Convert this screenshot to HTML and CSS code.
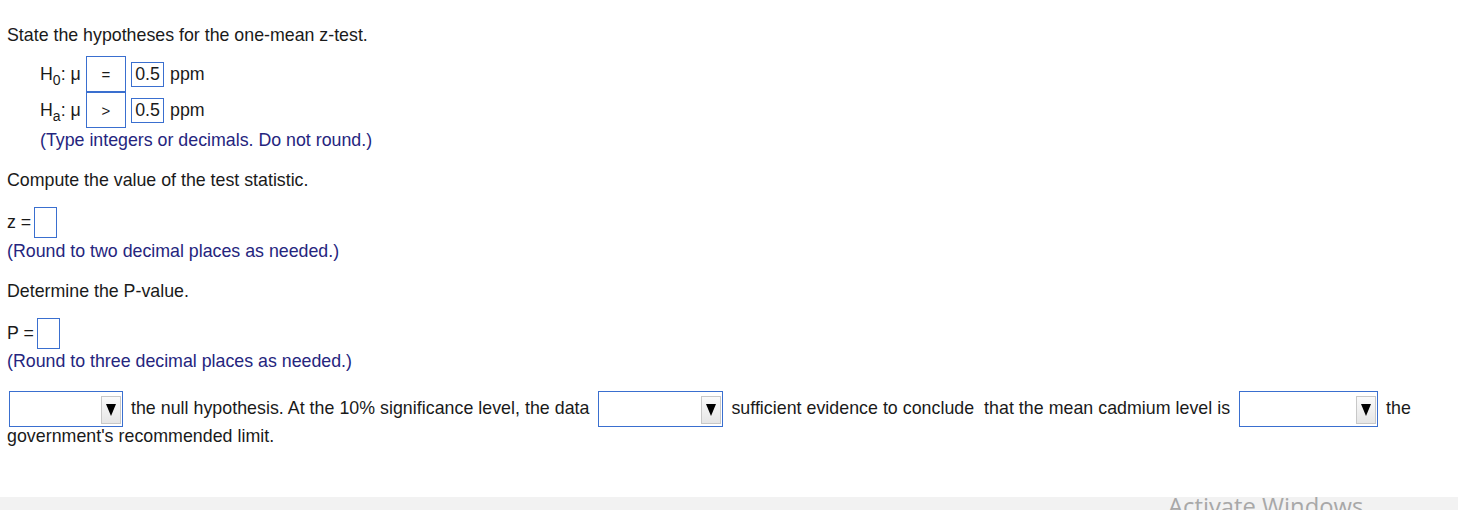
FILE: index.html
```html
<!DOCTYPE html>
<html>
<head>
<meta charset="utf-8">
<link rel="stylesheet" href="styles.css">
</head>
<body>
<div class="page">
  <div class="content">
    <p class="line title">State the hypotheses for the one-mean z-test.</p>
    <div class="hyp">
      <div class="hrow">
        <span class="hlabel">H<sub>0</sub>: μ</span>
        <span class="opbox">=</span>
        <span class="valbox">0.5</span>
        <span class="unit">ppm</span>
      </div>
      <div class="hrow">
        <span class="hlabel">H<sub>a</sub>: μ</span>
        <span class="opbox">&gt;</span>
        <span class="valbox">0.5</span>
        <span class="unit">ppm</span>
      </div>
      <p class="line note">(Type integers or decimals. Do not round.)</p>
    </div>
    <p class="line section">Compute the value of the test statistic.</p>
    <div class="ansrow">
      <span class="anslabel">z =</span>
      <span class="ansbox"></span>
    </div>
    <p class="line note note-z">(Round to two decimal places as needed.)</p>
    <p class="line section">Determine the P-value.</p>
    <div class="ansrow">
      <span class="anslabel">P =</span>
      <span class="ansbox"></span>
    </div>
    <p class="line note note-p">(Round to three decimal places as needed.)</p>
    <p class="conclusion"><span class="dd dd1"><span class="dd-arrow"></span></span> the null hypothesis. At the 10% significance level, the data <span class="dd dd2"><span class="dd-arrow"></span></span> sufficient evidence to conclude&nbsp; that the mean cadmium level is <span class="dd dd3"><span class="dd-arrow"></span></span> the government's recommended limit.</p>
  </div>
  <div class="footer"></div>
  <div class="watermark">Activate Windows</div>
</div>
</body>
</html>
```

FILE: styles.css
```css
html, body {
  margin: 0;
  padding: 0;
  background: #ffffff;
}

body {
  font-family: "Liberation Sans", Arial, sans-serif;
  font-size: 17.8px;
  color: #1a1a1a;
}

.page {
  position: relative;
  height: 510px;
  overflow: hidden;
  display: flex;
  flex-direction: column;
}

.content {
  flex: 1;
  padding: 25px 0 0 7px;
}

.line {
  margin: 0;
  line-height: 20px;
}

.hyp {
  margin-top: 11px;
  padding-left: 33px;
}

.hrow {
  display: flex;
  align-items: center;
  height: 36px;
}

.hlabel {
  width: 46px;
  line-height: 20px;
  white-space: nowrap;
}

.hlabel sub {
  font-size: 14px;
  vertical-align: -5px;
  line-height: 0;
}

.opbox {
  width: 38px;
  height: 34px;
  border: 1px solid #3a6fcf;
  display: flex;
  align-items: center;
  justify-content: center;
  font-size: 15px;
}

.valbox {
  margin-left: 5px;
  width: 31px;
  height: 23px;
  border: 1px solid #3a6fcf;
  display: flex;
  align-items: center;
  justify-content: center;
}

.unit {
  margin-left: 6px;
}

.note {
  color: #25257e;
  margin-top: 2px;
}

.section {
  margin-top: 20px;
}

.section + .ansrow {
  margin-top: 17px;
}

.ansrow {
  display: flex;
  align-items: center;
  height: 31px;
}

.anslabel {
  margin-right: 3px;
}

.ansbox {
  width: 21px;
  height: 29px;
  border: 1px solid #3a6fcf;
}

.note-z {
  margin-top: 3px;
}

.note-p {
  margin-top: 2px;
}

.conclusion {
  margin: 20px 0 0 0;
  line-height: 19px;
  letter-spacing: 0.03px;
}

.dd {
  display: inline-block;
  vertical-align: middle;
  height: 34px;
  border: 1px solid #3a6fcf;
  background: #ffffff;
  position: relative;
  box-sizing: content-box;
  margin-right: 3px;
}

.dd1 { width: 112px; margin-left: 2px; }
.dd2 { width: 123px; margin-left: 4px; }
.dd3 { width: 137px; margin-left: 4px; }

.dd-arrow {
  position: absolute;
  right: 1px;
  top: 4px;
  width: 18px;
  height: 26px;
  border: 1px solid #c8c8c8;
  background: linear-gradient(#fafafa, #e6e6e6);
}

.dd-arrow::after {
  content: "";
  position: absolute;
  left: 4px;
  top: 7px;
  width: 0;
  height: 0;
  border-left: 5px solid transparent;
  border-right: 5px solid transparent;
  border-top: 12px solid #000;
}

.footer {
  height: 13px;
  background: #f2f2f2;
}

.watermark {
  position: absolute;
  left: 1168px;
  top: 490px;
  font-family: "Open Sans", "DejaVu Sans", sans-serif;
  font-size: 23.8px;
  color: #a8a8a8;
  white-space: nowrap;
}
```
